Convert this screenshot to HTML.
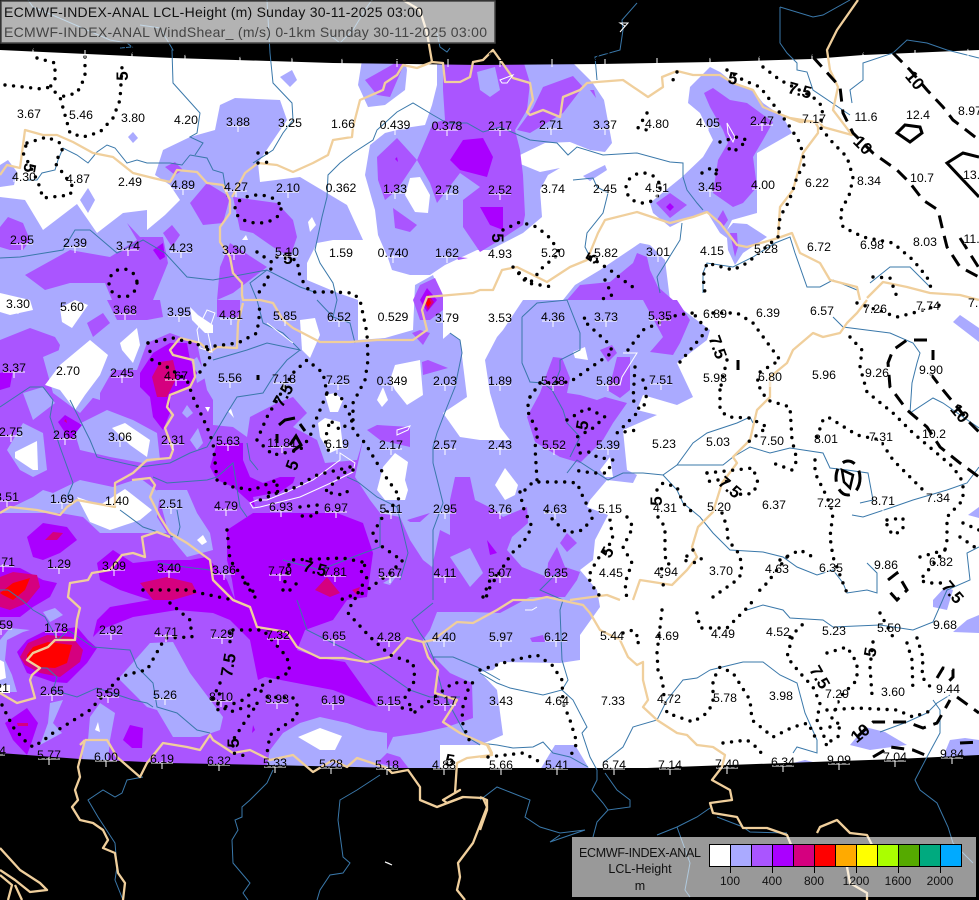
<!DOCTYPE html>
<html><head><meta charset="utf-8"><title>ECMWF-INDEX-ANAL LCL-Height</title>
<style>
html,body{margin:0;padding:0;background:#000}
svg{display:block;font-family:"Liberation Sans",sans-serif}
.lb text{font-size:12.3px;text-anchor:middle;fill:#000}
.cl text{font-size:17px;font-weight:bold;text-anchor:middle;fill:#000}
</style></head><body>
<svg width="979" height="900" viewBox="0 0 979 900" xmlns="http://www.w3.org/2000/svg">
<defs><path id="c" d="M-11 4H11M0 2V10" stroke="#fff" stroke-width="1" fill="none"/><path id="t" d="M0 2V10" stroke="#fff" stroke-width="1" fill="none"/></defs>
<rect width="979" height="900" fill="#fff"/>

<!-- light -->
<g fill="#aaaaff">
<polygon points="0,197 0,770 440,770 440,745 480,745 503,735 497,690 480,672 493,670 500,662 560,663 580,660 580,635 600,607 597,590 580,570 593,560 595,540 608,515 587,507 590,500 607,480 633,483 637,475 627,470 623,430 657,415 637,410 643,395 677,405 693,397 677,363 707,340 710,330 670,300 665,260 650,245 640,243 600,270 575,285 563,300 523,300 503,330 497,337 485,360 490,393 500,427 510,440 480,440 460,437 443,413 467,397 460,340 450,333 430,350 443,343 443,300 433,275 415,285 413,330 385,338 358,340 358,300 338,293 307,280 307,263 317,243 333,240 363,240 347,205 300,177 260,182 258,163 270,145 287,120 280,100 235,98 220,105 215,130 190,137 163,150 155,175 170,185 180,200 165,215 147,230 147,210 123,213 97,233 77,204 43,230 25,200"/>
<polygon points="362,60 358,85 368,107 385,105 405,90 407,70 405,60"/>
<polygon points="437,60 437,85 432,105 425,125 405,128 385,133 370,145 365,175 375,210 378,235 388,258 392,270 410,275 430,275 445,265 477,250 490,250 523,233 542,217 540,190 548,175 560,168 540,172 518,163 520,155 545,143 570,142 590,150 605,152 612,143 604,100 592,82 570,60"/>
<polygon points="583,176 605,165 607,170 590,181"/>
<polygon points="710,67 690,87 688,103 700,113 713,140 703,157 682,177 650,203 653,213 670,227 690,217 707,212 720,233 727,238 728,250 735,265 743,253 767,237 747,224 733,223 727,230 732,220 757,213 757,167 757,153 792,133 783,117 763,103 753,90 730,80 720,72"/>
<polygon points="280,77 292,70 297,80 290,87"/>
<polygon points="128,137 133,132 138,138 133,143"/>
<polygon points="0,165 8,160 17,172 14,185 0,187"/>
<polygon points="80,200 88,188 95,200 88,213"/>
<polygon points="953,322 960,315 979,328 979,342"/>
<polygon points="968,515 979,507 979,518"/>
<polygon points="933,600 945,587 953,590 947,610 933,607"/>
<polygon points="953,632 967,620 979,615 979,633"/>
<polygon points="850,745 865,727 885,732 907,745 870,750"/>
<polygon points="943,757 950,740 965,738 979,740 979,757"/>
<polygon points="793,763 805,760 817,763"/>
<polygon points="540,770 555,745 575,745 590,770"/>
</g>

<!-- purple -->
<g fill="#aa55ff">
<polygon points="0,340 30,328 55,337 60,345 50,385 100,400 100,393 113,370 137,370 147,343 170,333 197,343 207,390 213,400 213,425 233,427 247,437 250,417 277,403 293,397 307,413 293,427 317,440 325,463 357,460 363,440 355,477 370,500 380,513 400,517 410,540 423,560 432,567 440,530 450,535 450,500 455,477 470,477 475,500 495,510 503,517 527,507 528,523 512,537 507,550 522,567 547,577 548,563 557,547 565,567 580,572 577,580 565,597 530,597 500,613 473,612 437,612 430,630 423,640 430,653 450,673 472,683 473,718 447,727 420,733 393,737 387,750 387,733 367,730 347,723 320,717 300,723 283,733 270,750 265,775 0,775"/>
<polygon points="25,275 70,250 110,257 137,240 127,223 140,237 163,237 168,263 153,300 160,300 163,317 147,320 117,320 107,300 112,300 105,283 70,283 45,290"/>
<polygon points="87,323 103,313 110,323 93,337"/>
<polygon points="217,300 240,300 240,317 217,317"/>
<polygon points="443,60 523,60 530,83 527,110 515,130 520,150 523,175 525,215 523,225 500,240 480,252 463,227 463,200 480,187 460,173 437,203 430,183 417,160 433,123 445,120 443,90"/>
<polygon points="517,130 533,108 543,87 573,76 583,87 563,113 530,133"/>
<polygon points="590,90 594,90 596,98"/>
<polygon points="365,80 397,62 405,62 390,97 377,95"/>
<polygon points="377,157 397,138 417,160 397,190 385,200 378,180"/>
<polygon points="393,208 417,225 410,232 395,228"/>
<polygon points="704,93 713,88 730,100 747,103 773,122 763,140 753,157 757,187 743,203 733,207 713,193 718,160 728,143 723,130 710,107"/>
<polygon points="656,203 670,193 687,205 670,218"/>
<polygon points="717,220 723,210 728,220 723,227"/>
<polygon points="730,233 737,233 738,247 735,257"/>
<polygon points="567,300 580,285 610,282 633,263 637,253 647,257 650,270 658,287 673,300"/>
<polygon points="643,300 677,300 690,320 680,343 673,355 650,352 663,337"/>
<polygon points="600,350 612,345 617,353 608,362"/>
<polygon points="617,357 630,357 630,390 620,398 607,390 612,377"/>
<polygon points="553,357 562,358 570,378 567,393 580,395 597,400 605,397 627,403 613,423 603,440 580,463 560,457 535,442 527,417 540,393 547,373"/>
<polygon points="560,543 567,533 577,543 567,552"/>
<polygon points="530,638 543,635 545,642 532,642"/>
<polygon points="165,167 175,162 183,170 175,175"/>
<polygon points="190,203 207,183 230,197 223,223 203,225"/>
<polygon points="233,197 277,203 293,220 297,237 290,257 273,247 253,233 240,230"/>
<polygon points="220,267 230,243 267,267 233,293 217,300"/>
<polygon points="163,233 172,225 180,235 172,247"/>
<polygon points="0,227 8,217 23,223 30,240 23,250 10,250 0,247"/>
<polygon points="457,257 468,258 458,260"/>
<polygon points="413,300 420,285 435,278 443,295 443,310 430,320 420,320"/>
<polygon points="412,333 420,330 430,333 423,345"/>
<polygon points="422,362 428,360 448,368 423,375"/>
<polygon points="367,430 377,425 410,427 410,447 380,440"/>
<polygon points="407,520 430,513 420,522 410,522"/>
<polygon points="377,763 387,753 400,757 410,770"/>
</g>

<!-- light patches on purple -->
<g fill="#aaaaff">
<polygon points="477,72 495,67 500,90 490,97 480,90"/>
<polygon points="43,357 90,337 113,350 107,380 97,393 80,413 53,393"/>
<polygon points="23,393 43,387 55,403 33,420"/>
<polygon points="7,450 23,423 43,433 47,470 33,477 20,470"/>
<polygon points="73,427 107,410 133,420 157,433 160,460 143,463 110,457 80,450"/>
<polygon points="0,513 33,497 43,490 53,493 80,480 113,487 140,478 160,493 157,517 167,533 140,533 100,533 83,517 60,513 20,513"/>
<polygon points="157,490 187,490 197,513 210,533 213,550 187,557 173,540 167,527"/>
<polygon points="197,357 207,377 197,383 193,360"/>
<polygon points="182,413 187,405 193,413 187,418"/>
<polygon points="190,440 198,428 203,443 197,450"/>
<polygon points="450,557 470,548 483,573 470,587"/>
<polygon points="383,583 397,575 390,585"/>
<polygon points="120,677 150,643 173,642 190,673 223,717 220,730 200,737 173,737 157,710 147,707 120,680"/>
<polygon points="90,717 100,703 115,713 110,740 107,770 82,770 83,740 88,740"/>
<polygon points="50,703 63,700 53,723 62,733 40,745 48,723"/>
<polygon points="0,640 10,628 30,630 23,632 7,640 5,660 12,675 17,692 0,692"/>
<polygon points="43,612 55,608 63,615 50,622"/>
</g>

<!-- white holes -->
<g fill="#fff">
<polygon points="410,178 420,177 430,195 428,213 415,212 405,195"/>
<polygon points="308,222 312,217 316,225 310,232"/>
<polygon points="242,240 246,235 248,240 245,240"/>
<polygon points="60,308 75,300 88,305 72,328 62,322"/>
<polygon points="0,293 30,300 33,310 10,315 0,312"/>
<polygon points="190,307 198,315 213,325 213,333 205,333 192,320"/>
<polygon points="120,343 137,328 140,345 133,363 122,350"/>
<polygon points="45,385 60,365 90,340 108,355 100,375 85,395 75,410 60,390"/>
<polygon points="15,452 37,441 38,470 33,470 15,458"/>
<polygon points="112,428 125,423 150,440 147,457 130,445"/>
<polygon points="77,497 100,505 125,489 152,510 140,520 110,530 90,522"/>
<polygon points="197,540 203,535 207,542 202,545"/>
<polygon points="377,490 383,467 395,453 408,462 405,480 408,490 405,500 385,500"/>
<polygon points="390,380 395,365 420,360 423,395 407,405 395,390"/>
<polygon points="377,400 383,387 388,400 382,407"/>
<polygon points="325,395 335,393 343,400 338,412 330,412"/>
<polygon points="318,423 325,418 340,422 343,447 330,453 320,437"/>
<polygon points="300,320 315,318 320,335 310,358 302,350"/>
<polygon points="298,737 320,728 342,736 335,750 320,750"/>
<polygon points="95,730 98,722 100,732"/>
<polygon points="0,660 4,662 6,678 0,680"/>
<polygon points="0,685 10,685 10,693 0,693"/>
<polygon points="495,485 505,468 518,485 515,495 505,500"/>
<polygon points="573,352 585,347 588,360 575,358"/>
<polygon points="600,470 610,457 613,477 605,477"/>
<polygon points="205,407 210,407 208,412"/>
<polygon points="228,411 231,409 234,418"/>
</g>

<!-- violet -->
<g fill="#aa00ff">
<polygon points="450,160 463,140 483,138 493,157 487,177 460,170"/>
<polygon points="480,207 503,207 503,230 490,225"/>
<polygon points="670,203 674,207 670,211 666,207"/>
<polygon points="395,159 397,157 398,162"/>
<polygon points="140,373 153,353 170,343 187,343 190,360 197,373 190,387 170,397 170,413 163,430 153,417 150,397 140,387"/>
<polygon points="58,422 65,415 82,425 70,440"/>
<polygon points="0,373 13,370 10,387 0,390"/>
<polygon points="210,467 217,443 243,443 243,460 250,477 263,483 280,477 295,477 293,483 280,492 253,497 255,507 233,487 217,480"/>
<polygon points="97,563 113,550 133,563 160,560 190,560 207,557 227,580 235,600 253,610 293,633 297,650 320,658 345,662 360,683 377,707 333,690 265,677 258,680 250,640 230,620 213,613 177,610 133,617 100,630 93,637 97,620 110,607 150,600 120,590 100,580"/>
<polygon points="227,530 253,513 337,513 363,523 373,553 367,597 347,600 333,620 305,630 297,650 253,620 235,600 232,580 227,560"/>
<polygon points="27,537 43,523 67,527 77,540 60,553 43,560 33,557"/>
<polygon points="0,567 20,568 43,580 57,583 50,597 33,607 20,617 0,617"/>
<polygon points="17,652 27,640 43,632 77,627 88,640 97,648 87,663 67,683 53,682 27,673"/>
<polygon points="5,723 27,708 38,723 30,747 27,755 13,740"/>
<polygon points="123,740 130,725 143,728 142,748 132,748"/>
<polygon points="153,250 163,243 165,257 160,260"/>
<polygon points="420,300 427,288 437,300 427,312"/>
<polygon points="487,540 497,553 490,555"/>
<polygon points="253,725 255,730 252,733"/>
</g>

<!-- magenta -->
<g fill="#d5007f">
<polygon points="152,377 160,362 173,360 177,377 167,397 157,397"/>
<polygon points="45,540 53,532 63,533 57,540"/>
<polygon points="0,577 13,572 37,575 40,587 27,603 10,610 0,607"/>
<polygon points="20,657 28,643 47,635 72,637 83,650 80,662 60,677 40,673 25,665"/>
<polygon points="17,723 28,723 28,726 18,726"/>
<polygon points="315,590 327,577 340,593 330,597"/>
<polygon points="352,590 360,587 357,595"/>
<polygon points="140,583 167,577 192,583 197,593 173,600 153,600"/>
<polygon points="424,302 428,294 434,302 428,310"/>
<polygon points="64,421 66,419 67,423"/>
</g>
<g fill="#ff0000">
<polygon points="0,593 13,583 30,578 25,590 13,600 3,595"/>
<polygon points="27,655 33,647 48,642 72,645 67,663 55,668 38,667 27,660"/>
<polygon points="426,303 429,298 431,303 428,307"/>
</g>

<!-- black outside -->
<polygon fill="#000" points="0,0 979,0 979,50 863,55 812,59 713,62 600,64 480,65 333,63 173,58 43,52 0,50"/>
<polygon fill="#000" points="0,753 80,759 167,763 267,765 400,768 647,768 813,762 897,759 979,755 979,900 0,900"/>

<!-- rivers -->
<g fill="none" stroke="#3a78aa" stroke-width="1">
<path d="M28,0 33,7 57,17 87,30 110,40 127,43 132,47 120,48"/>
<path d="M140,25 160,28 173,50 172,50 173,83 200,113 197,133 190,137 203,143 195,155"/>
<path d="M190,155 207,158 213,170 223,173 227,197"/>
<path d="M190,155 182,165 170,163 147,163 137,160 127,163 115,148 107,145 97,152 88,163 77,155 63,148 58,160 55,170 42,173 37,180 27,180"/>
<path d="M267,0 270,53 273,83 292,103 293,120 283,133 273,150 253,163"/>
<path d="M327,33 340,43 353,30 367,7 372,0"/>
<path d="M437,33 440,47 447,52 450,48"/>
<path d="M447,123 433,115 413,103 397,112 377,130 373,140 353,153 340,163 328,175 327,197 322,217 315,250 320,263 333,283 337,300 333,317"/>
<path d="M317,300 333,317 350,323 355,343"/>
<path d="M447,123 467,123 483,132 500,127 530,140 557,143 568,155 577,147 603,155 637,153 670,162 683,163 683,177 687,190 697,203 703,210"/>
<path d="M597,80 595,57 620,50 623,30 622,20 637,3"/>
<path d="M573,180 593,178 597,187 608,193 603,213 587,233 585,247 590,257"/>
<path d="M893,53 907,40 927,43 947,50 979,58"/>
<path d="M893,53 863,63 863,80 850,90 852,103"/>
<path d="M780,7 813,17 823,15 850,0"/>
<path d="M780,7 780,43 787,53 797,63 797,70 807,72 813,90 850,115"/>
<path d="M682,223 680,240 657,277 660,293"/>
<path d="M703,293 703,273 707,263 733,267 753,257 775,243 790,237 795,253 807,287 820,287 833,280 857,290"/>
<path d="M870,283 890,267 910,267 930,287"/>
<path d="M833,317 843,327 890,333 913,343 920,353 917,363 912,383 910,413 933,398 943,403 953,410 979,428"/>
<path d="M522,317 537,303 567,300 580,333 580,350 560,360 560,370 552,390 563,410 567,423 580,437 570,457"/>
<path d="M522,317 522,363 530,382 543,383 552,390"/>
<path d="M567,473 577,460 608,480 623,473 643,473 663,475 677,465 723,465 733,457 750,447 770,453 790,448 823,453 830,468 847,470 868,473 873,500 860,503"/>
<path d="M677,465 693,443 707,433 737,423 750,417 753,423"/>
<path d="M852,515 863,517 890,508 913,500 947,490 967,483 979,467"/>
<path d="M663,475 677,490 683,503 700,517 713,533 730,550 763,552 783,557 797,567 817,575 833,570 843,583 847,593 867,590 877,593 877,573 867,563"/>
<path d="M979,547 967,553 970,580 947,590 933,622 913,630 880,625 833,627 823,620 790,618 783,610 763,605 747,610"/>
<path d="M710,670 743,662 763,662 780,675 797,683 805,713 817,740 817,753 797,747 793,753"/>
<path d="M710,670 697,678 683,680 667,700 657,720 633,727 623,747 603,763"/>
<path d="M480,673 497,683 510,688 543,695 562,690 568,680 562,660 560,610 563,600 540,590 560,570"/>
<path d="M562,690 573,700 587,727 582,733 590,757 597,770 597,780 592,790 603,803 608,810 630,807 630,800 617,790 605,773"/>
<path d="M480,743 497,745 513,748 533,747 543,742 553,753 570,757 588,767"/>
<path d="M933,700 940,710 940,733 927,757 915,780 920,790 937,803 948,827 953,843 973,863"/>
<path d="M880,732 907,722 927,713 937,703 950,695"/>
<path d="M273,770 267,783 250,800 242,807 242,817 235,820 238,830 232,840 233,863 250,883 243,893 248,900"/>
<path d="M380,775 357,790 340,800 338,820 343,857 350,863 343,873 330,875 320,890 317,900"/>
<path d="M143,777 127,780 122,793 115,797 103,790 88,800 98,817 115,843 117,867 115,880 123,900"/>
<path d="M480,800 497,787 530,800 525,817 540,827 560,833 585,830 550,842 560,835"/>
<path d="M593,837 597,822 608,810"/>
<path d="M657,835 677,827 697,817 710,808"/>
<path d="M677,827 690,863 685,890 690,897"/>
<path d="M717,817 743,827 750,832 787,833"/>
<path d="M0,258 20,257 63,250 75,230 90,230 117,253 143,240 165,253 187,277 213,280 267,270 300,287 317,293"/>
<path d="M267,270 250,283 257,300 263,323 283,333 300,350 267,343 247,350 213,360"/>
<path d="M300,350 287,360 273,377 263,393 237,397 227,413 207,447 190,453 170,463 140,467 97,457 90,440 70,400"/>
<path d="M0,407 30,387 43,387 53,400 50,417 60,447 73,483 67,497"/>
<path d="M153,477 167,483 207,480 217,477 233,463 240,507 247,517"/>
<path d="M247,443 250,460 258,470"/>
<path d="M120,510 143,527 173,537"/>
<path d="M177,510 180,527 177,538"/>
<path d="M347,477 358,482 377,497 397,507 408,553 400,580"/>
<path d="M380,517 380,547 353,557 320,570 283,560"/>
<path d="M158,563 185,567 210,570"/>
<path d="M450,333 460,340 462,353 455,387 447,407 437,433 433,447 433,463 443,503 433,530 433,600"/>
<path d="M0,590 8,590 22,600 33,610 45,617 58,640 68,630 93,647 130,650 137,667 153,683 157,707 177,713 197,730 210,733"/>
<path d="M40,668 47,668 57,677 53,690 77,697 97,688 133,700 147,703 153,707"/>
<path d="M297,600 307,630 347,650 377,667 410,690 430,697 460,697"/>
<path d="M433,603 412,620 420,633 427,643 433,657 453,657 477,667 500,680"/>
<path d="M433,657 443,693 467,737 480,745"/>
</g>

<!-- borders -->
<g fill="none" stroke="#f0cf9c" stroke-width="2.3" stroke-linejoin="round">
<path d="M0,175 7,165 20,168 25,130 43,135 57,135 73,142 93,153 113,157 133,173 153,178 170,182 177,170 197,172 207,183 223,185 230,200 230,213 220,227 220,242 230,257 233,273 242,283 242,295 243,300 260,300 273,303 283,320 293,328 320,342 350,342 377,340 413,340 427,330 422,310 427,297 473,293 480,290 493,290 502,270 517,267 547,282 570,267 587,260 598,233 605,220 637,212 670,223 693,217 707,212 720,223 737,245 747,247 778,238 792,233 800,253 820,263 830,280 857,287 860,300"/>
<path d="M867,298 883,282 907,287 930,293 960,295 979,300"/>
<path d="M778,238 780,207 793,190 803,153 818,133 818,127 815,122 790,118"/>
<path d="M858,0 837,30 827,50 830,70 838,87 833,110 852,135 823,127 820,123 800,122 782,115 763,107 753,90 733,83 720,75 693,75 677,71 662,77 663,87 648,97 623,80 597,82 587,83 580,90 563,97 560,117 543,110 530,115 527,112 533,100 530,83 513,78 493,50 483,60 473,62 470,77 460,82 445,82 443,63 432,62 417,68 403,65 397,75 385,83 383,90 360,100 353,127 352,137 333,140 328,155 313,163 293,172 277,165 258,163 245,173 232,197"/>
<path d="M432,62 427,33 420,10 403,0"/>
<path d="M180,338 170,350 173,355 193,360 195,377 190,387 170,395 167,407 173,415 165,428 173,450 170,458 147,460 133,473 115,483 115,507 77,500 67,507 60,515 37,510 10,507 0,513"/>
<path d="M180,338 200,343 210,352 217,347 237,348 238,323 243,303"/>
<path d="M132,480 150,478 155,485 150,497 160,517 170,533 187,543 210,560 213,580 233,600 250,607 257,627 287,632 297,647 320,658 343,658 367,662 390,657 407,638 423,642 433,640 457,622 473,623 497,610 513,600 533,600 547,597 560,600 583,605 590,613 600,630 620,640 628,657 637,665 643,662 643,680 648,700 643,707 657,720 677,733 687,735 697,745 713,747 725,755 722,767 712,780 730,790 732,800 710,803 713,813 737,817 743,828 767,828 787,835 792,847"/>
<path d="M423,642 428,657 438,670 435,693 457,700 443,722 460,733 487,745 492,755 467,758 457,763 455,793 460,790 443,800 447,803 463,797 483,798 487,807 473,843 458,863 460,877 457,890 465,900"/>
<path d="M85,740 107,740 117,757 140,777 147,763 163,743 187,747 200,750 210,735 213,740 233,753 250,750 270,760 293,755 313,772 333,760 347,767 357,758 387,768 392,773 408,770 420,787 420,800 437,807 463,797"/>
<path d="M85,740 78,767 80,777 75,790 78,800 72,807 80,820 93,823 103,830 108,840 103,848 115,853 118,873 125,883 123,900"/>
<path d="M85,740 80,745"/>
<path d="M0,693 17,703 35,698 30,680 32,675 40,668 27,660 33,653 48,647 55,640 75,640 77,620 80,608 68,597 70,583 88,580 92,573 110,570 122,555 133,553 145,557 142,537 157,532 170,537"/>
<path d="M0,848 20,870 40,883 47,890 30,892 15,880 0,870"/>
<path d="M0,875 12,885 8,900M15,885 22,900"/>
<path d="M817,833 820,827 837,820 850,833 867,835 873,847 847,867 850,883 867,893 867,900"/>
<path d="M633,600 640,580 672,585 687,570 697,557 692,547 698,527 713,512 722,483 737,463 733,457 750,440 757,410 770,397 770,377 787,363 793,350 813,333 823,337 840,333 847,323 857,313 867,300"/>
<path d="M620,600 607,595 570,600"/>
<path d="M480,743 488,745 492,753 488,757 480,757"/>
<path d="M480,797 487,800 487,810 480,830"/>
</g>

<!-- white outlines -->
<g fill="none" stroke="#fff" stroke-width="1">
<path d="M340,453 355,463 353,472 333,482 300,497 260,507 253,508 250,503 257,500 267,500 287,492 313,480 340,460Z"/>
<path d="M197,330 207,310 215,313 208,333 212,352 200,348Z"/>
<path d="M397,430 410,426 408,430 397,435Z"/>
<path d="M727,123 735,137 733,142 728,133Z"/>
<path d="M760,173 767,173 765,178 760,177Z"/>
<path d="M500,80 513,75 507,83 502,83Z"/>
<path d="M620,23 628,23 620,32 625,26Z"/>
<path d="M623,353 637,353 622,377 620,385 612,383"/>
<path d="M385,862 392,865 388,863Z"/>
<path d="M525,610 532,610 537,607"/>
<path d="M267,323 280,333 293,343"/>
</g>

<!-- dotted contours -->
<g fill="none" stroke="#000" stroke-width="3.4" stroke-linecap="round" stroke-dasharray="0 8.6">
<path d="M37,58 55,63 55,80 50,87 60,97 70,133 83,137 100,132 113,118 120,100 122,67"/>
<path d="M5,85 42,89 50,87"/>
<path d="M85,57 85,77 77,93 60,97"/>
<path d="M27,143 47,137 60,143 63,148 55,163 62,172 73,187 70,195 43,198 38,182 27,160 23,153 27,143"/>
<ellipse cx="258" cy="209" rx="23" ry="14"/>
<circle cx="123" cy="283" r="14"/>
<path d="M258,153 270,153M258,163 270,162"/>
<path d="M257,252 273,263 267,280 263,287 257,295"/>
<path d="M277,257 297,260 300,277 310,292 333,292 353,293 360,300 367,333 368,360 365,380 353,403 353,430 365,443 383,473 400,497 382,518 373,533 377,543 397,557 403,560 390,573 367,590 353,600 348,613 370,637 390,655 413,663 415,680 405,697 413,710 397,707"/>
<path d="M415,712 453,683 473,682 468,690 462,710 463,725 470,742"/>
<path d="M148,343 173,338 207,347 238,343 257,333 260,310 255,302"/>
<path d="M148,343 152,360 167,367 187,380 193,397 207,427 213,443 217,480 233,487 253,490 277,480 277,493 253,503"/>
<path d="M200,372 210,357 207,347"/>
<path d="M227,530 230,560 247,583 257,597"/>
<path d="M143,590 190,590 200,593 233,600"/>
<path d="M170,603 190,620 192,637 165,638 147,670 137,672 120,677 90,710 53,733 40,743 32,745"/>
<path d="M233,630 263,630 287,657 290,672 273,680 257,688 243,700 217,710 220,690"/>
<path d="M230,633 230,647"/>
<path d="M220,683 212,700 230,712 258,703 248,717 233,740 233,753 250,757"/>
<path d="M297,705 297,717 270,735 267,753"/>
<path d="M293,698 267,697 258,688"/>
<path d="M2,705 13,727 27,743 33,747"/>
<path d="M257,440 267,417 293,373 307,360 323,373 327,393 320,410 317,417 312,430 310,437 300,450 273,455 257,440"/>
<path d="M327,393 340,395 347,410 353,420 340,430 330,420 325,440 330,455"/>
<path d="M353,470 343,473 325,492 343,495 353,487"/>
<path d="M350,467 317,475 290,490 267,493"/>
<path d="M300,507 318,505 316,516 300,516"/>
<path d="M283,590 290,560 343,558 367,563 360,570 367,577 358,593 340,600"/>
<path d="M245,583 257,600M290,590 297,583"/>
<path d="M483,597 490,580 500,573"/>
<path d="M525,490 533,482 567,482 577,483 583,497 593,517 583,530 567,533 553,520 543,507"/>
<path d="M520,492 523,507 532,527 523,543 512,553 503,567 490,587 485,600"/>
<path d="M530,397 527,410 538,433 535,447 537,480"/>
<path d="M540,383 570,382 590,368 613,352 607,342 583,320 587,315"/>
<path d="M540,383 530,397"/>
<path d="M628,350 643,330 677,315 693,313"/>
<path d="M713,313 737,313 753,323 780,360 760,372 757,383 767,400 790,407 792,440 797,460 792,470 770,462"/>
<path d="M680,362 707,330 693,313"/>
<path d="M720,390 720,410 728,417 750,418 767,427 747,443"/>
<path d="M727,360 723,377 720,390"/>
<path d="M635,367 633,400 640,410 623,427 617,433 637,430"/>
<path d="M643,380 647,393 643,410"/>
<path d="M567,420 587,408 605,417 593,428 577,437 580,453 590,452 597,457 613,460 607,473 593,473 573,470"/>
<path d="M707,473 753,468 758,483 753,493 743,495 737,493"/>
<path d="M707,473 710,483M718,480 730,482"/>
<path d="M657,490 663,483 677,487 683,503 693,513"/>
<path d="M658,517 665,527 665,557 670,563 660,570 665,593"/>
<path d="M693,550 683,560 697,563 703,557"/>
<path d="M722,513 727,527 728,540 740,555 742,573 737,580 713,597"/>
<path d="M610,520 613,540 597,560 588,577 595,590 603,600"/>
<path d="M627,517 633,527 623,547 632,563 625,583 627,600"/>
<path d="M857,303 897,317 913,313 940,305"/>
<path d="M850,337 862,350 860,367 867,392 893,413 913,433 953,467 963,482 963,500 947,517 947,540 945,550"/>
<path d="M817,437 823,420 828,417 857,435 880,440 893,460 923,490"/>
<path d="M815,460 815,473 827,497 833,513 830,537 833,557 843,583 847,593"/>
<path d="M780,560 800,550 813,557"/>
<path d="M787,557 767,583 757,593"/>
<path d="M887,520 903,518 903,530 893,535 887,527Z"/>
<path d="M920,557 945,550 920,580 927,583 947,583"/>
<path d="M963,523 979,530M960,537 979,550"/>
<path d="M727,70 743,80 760,87 770,100 780,113 790,127 800,143 805,163 797,177 792,193 788,203 780,217 778,237 747,263 733,270 707,263 703,277 705,293"/>
<path d="M763,67 780,80 813,97 823,107 820,127 833,143 847,157 853,177 850,193 840,213 843,227 863,237 893,243 913,260 927,277 933,293"/>
<path d="M873,277 890,278 897,297"/>
<path d="M647,113 638,128 647,130 650,123"/>
<path d="M677,72 673,80 680,82"/>
<ellipse cx="643" cy="188" rx="17" ry="15"/>
<path d="M720,142 737,137 747,140 740,147 733,152 727,147"/>
<path d="M702,173 713,167 720,173 710,175"/>
<path d="M503,230 520,222 537,227 550,238 560,253 543,267 530,283 513,267 527,283 553,287"/>
<path d="M590,257 610,270 623,280 637,290"/>
<path d="M605,280 612,295 600,300"/>
<path d="M623,633 633,630 640,640 635,647"/>
<path d="M662,610 657,653 658,670 663,682 663,690 667,713 693,722 707,713 713,703 713,680 720,667 733,673 750,700 752,720 773,737 793,727 808,723 815,737"/>
<path d="M697,613 700,628 727,628 747,608 752,602"/>
<path d="M792,638 787,657 800,673 813,687 820,703 817,720 823,733 827,747"/>
<path d="M790,637 807,620"/>
<path d="M873,642 870,667 872,695"/>
<path d="M827,653 847,647 857,663 857,680 840,697 830,723"/>
<path d="M907,643 912,660 913,693"/>
<path d="M917,638 923,657 922,677 933,690"/>
<path d="M827,710 857,708 897,710 913,717 933,710"/>
<path d="M830,727 840,722 838,737 827,743"/>
<path d="M723,743 747,740 760,750 763,760"/>
<path d="M480,670 513,660 537,655 552,665 562,680 563,703 570,720 577,743 570,757"/>
<path d="M488,757 523,753 540,762"/>
<path d="M880,613 893,637"/>
</g>

<!-- dashed / solid contours -->
<g fill="none" stroke="#000" stroke-width="3">
<g stroke-dasharray="13 8">
<path d="M813,57 840,87 843,113 853,133 873,153 897,170 910,183 923,200 938,210 942,227 947,247 960,267 979,277"/>
<path d="M893,53 910,70 927,90 943,107 953,120 979,140"/>
<path d="M927,340 907,340 893,350 888,363 890,387 907,410 927,427 940,447 960,463 979,477"/>
<path d="M933,350 933,360"/>
<path d="M930,373 943,390 957,407 970,423 979,432"/>
<ellipse cx="848" cy="478" rx="12" ry="17"/>
<path d="M888,580 897,573 907,590 897,600 888,590"/>
<path d="M937,678 943,668 953,670 953,677 947,683"/>
<path d="M857,737 873,722 907,722 923,728 937,723 950,700"/>
<path d="M957,697 979,713"/>
<path d="M873,757 890,747 913,750 930,757"/>
<path d="M960,743 979,742"/>
<path d="M960,238 979,268"/>
</g>
<path d="M897,133 905,125 920,127 922,133 910,142 897,133Z"/>
<path d="M979,157 963,153 947,163 979,197"/>
<path d="M842,470 853,475 850,488 844,482Z" stroke-width="2.5"/>
<path d="M279,425 285,420 295,418M300,424 305,431M277,434 277,443M290,445 296,436 301,445 293,451M258,375 258,380"/>
<path d="M738,360 738,370" />
</g>

<!-- contour labels -->
<g class="cl">
<text transform="translate(122 76) rotate(-90)" y="6">5</text>
<text transform="translate(30 168) rotate(100)" y="6">5</text>
<text transform="translate(288 258)" y="6">5</text>
<text transform="translate(498 238) rotate(90)" y="6">5</text>
<text transform="translate(592 258) rotate(-60)" y="6">5</text>
<text transform="translate(733 78) rotate(10)" y="6">5</text>
<text transform="translate(292 465) rotate(-70)" y="6">5</text>
<text transform="translate(582 425) rotate(-80)" y="6">5</text>
<text transform="translate(233 743) rotate(-90)" y="6">5</text>
<text transform="translate(450 760) rotate(10)" y="6">5</text>
<text transform="translate(656 501) rotate(-90)" y="6">5</text>
<text transform="translate(607 552) rotate(-60)" y="6">5</text>
<text transform="translate(870 652) rotate(-80)" y="6">5</text>
<text transform="translate(283 395) rotate(-60)" y="6">7.5</text>
<text transform="translate(315 568) rotate(15)" y="6">7.5</text>
<text transform="translate(228 665) rotate(-80)" y="6">7.5</text>
<text transform="translate(800 90) rotate(15)" y="6">7.5</text>
<text transform="translate(718 347) rotate(70)" y="6">7.5</text>
<text transform="translate(730 487) rotate(40)" y="6">7.5</text>
<text transform="translate(820 677) rotate(60)" y="6">7.5</text>
<text transform="translate(953 592) rotate(50)" y="6">7.5</text>
<text transform="translate(915 80) rotate(50)" y="6">10</text>
<text transform="translate(863 145) rotate(45)" y="6">10</text>
<text transform="translate(960 413) rotate(50)" y="6">10</text>
<text transform="translate(860 733) rotate(-40)" y="6">10</text>
</g>

<!-- value labels -->
<g class="lb">
<use href="#t" x="33" y="46"/><text x="33" y="50">1.82</text><use href="#t" x="85" y="48"/><text x="85" y="52">3.41</text><use href="#t" x="132" y="50"/><text x="132" y="54">3.50</text><use href="#t" x="185" y="52"/><text x="185" y="56">2.61</text><use href="#t" x="240" y="54"/><text x="240" y="58">4.65</text><use href="#t" x="292" y="55"/><text x="292" y="59">1.62</text><use href="#t" x="342" y="56"/><text x="342" y="60">2.61</text><use href="#t" x="397" y="57"/><text x="397" y="61">4.13</text><use href="#t" x="448" y="57"/><text x="448" y="61">0.733</text><use href="#t" x="500" y="57"/><text x="500" y="61">2.10</text><use href="#t" x="552" y="57"/><text x="552" y="61">2.43</text><use href="#t" x="605" y="57"/><text x="605" y="61">2.72</text><use href="#t" x="657" y="56"/><text x="657" y="60">4.41</text><use href="#t" x="710" y="55"/><text x="710" y="59">7.65</text><use href="#t" x="759" y="54"/><text x="759" y="58">3.33</text><use href="#t" x="812" y="52"/><text x="812" y="56">4.90</text><use href="#t" x="863" y="50"/><text x="863" y="54">7.83</text><use href="#t" x="915" y="48"/><text x="915" y="52">2.41</text><use href="#t" x="968" y="46"/><text x="968" y="50">1.60</text>
<use href="#c" x="29" y="114"/><text x="29" y="118">3.67</text><use href="#c" x="81" y="115"/><text x="81" y="119">5.46</text><use href="#c" x="133" y="118"/><text x="133" y="122">3.80</text><use href="#c" x="186" y="120"/><text x="186" y="124">4.20</text><use href="#c" x="238" y="122"/><text x="238" y="126">3.88</text><use href="#c" x="290" y="123"/><text x="290" y="127">3.25</text><use href="#c" x="343" y="124"/><text x="343" y="128">1.66</text><use href="#c" x="395" y="125"/><text x="395" y="129">0.439</text><use href="#c" x="447" y="126"/><text x="447" y="130">0.378</text><use href="#c" x="500" y="126"/><text x="500" y="130">2.17</text><use href="#c" x="551" y="125"/><text x="551" y="129">2.71</text><use href="#c" x="605" y="125"/><text x="605" y="129">3.37</text><use href="#c" x="657" y="124"/><text x="657" y="128">4.80</text><use href="#c" x="708" y="123"/><text x="708" y="127">4.05</text><use href="#c" x="762" y="121"/><text x="762" y="125">2.47</text><use href="#c" x="814" y="119"/><text x="814" y="123">7.17</text><use href="#c" x="866" y="117"/><text x="866" y="121">11.6</text><use href="#c" x="918" y="115"/><text x="918" y="119">12.4</text><use href="#c" x="970" y="111"/><text x="970" y="115">8.97</text>
<use href="#c" x="24" y="177"/><text x="24" y="181">4.30</text><use href="#c" x="78" y="179"/><text x="78" y="183">4.87</text><use href="#c" x="130" y="182"/><text x="130" y="186">2.49</text><use href="#c" x="183" y="185"/><text x="183" y="189">4.89</text><use href="#c" x="236" y="187"/><text x="236" y="191">4.27</text><use href="#c" x="288" y="188"/><text x="288" y="192">2.10</text><use href="#c" x="341" y="188"/><text x="341" y="192">0.362</text><use href="#c" x="395" y="189"/><text x="395" y="193">1.33</text><use href="#c" x="447" y="190"/><text x="447" y="194">2.78</text><use href="#c" x="500" y="190"/><text x="500" y="194">2.52</text><use href="#c" x="553" y="189"/><text x="553" y="193">3.74</text><use href="#c" x="605" y="189"/><text x="605" y="193">2.45</text><use href="#c" x="657" y="188"/><text x="657" y="192">4.51</text><use href="#c" x="710" y="187"/><text x="710" y="191">3.45</text><use href="#c" x="763" y="185"/><text x="763" y="189">4.00</text><use href="#c" x="817" y="183"/><text x="817" y="187">6.22</text><use href="#c" x="869" y="181"/><text x="869" y="185">8.34</text><use href="#c" x="922" y="178"/><text x="922" y="182">10.7</text><use href="#c" x="975" y="175"/><text x="975" y="179">13.1</text>
<use href="#c" x="22" y="240"/><text x="22" y="244">2.95</text><use href="#c" x="75" y="243"/><text x="75" y="247">2.39</text><use href="#c" x="128" y="246"/><text x="128" y="250">3.74</text><use href="#c" x="181" y="248"/><text x="181" y="252">4.23</text><use href="#c" x="234" y="250"/><text x="234" y="254">3.30</text><use href="#c" x="287" y="252"/><text x="287" y="256">5.10</text><use href="#c" x="341" y="253"/><text x="341" y="257">1.59</text><use href="#c" x="393" y="253"/><text x="393" y="257">0.740</text><use href="#c" x="447" y="253"/><text x="447" y="257">1.62</text><use href="#c" x="500" y="254"/><text x="500" y="258">4.93</text><use href="#c" x="553" y="253"/><text x="553" y="257">5.20</text><use href="#c" x="606" y="253"/><text x="606" y="257">5.82</text><use href="#c" x="658" y="252"/><text x="658" y="256">3.01</text><use href="#c" x="712" y="251"/><text x="712" y="255">4.15</text><use href="#c" x="766" y="249"/><text x="766" y="253">5.28</text><use href="#c" x="819" y="247"/><text x="819" y="251">6.72</text><use href="#c" x="872" y="245"/><text x="872" y="249">6.98</text><use href="#c" x="925" y="242"/><text x="925" y="246">8.03</text><use href="#c" x="975" y="239"/><text x="975" y="243">11.2</text>
<use href="#c" x="18" y="304"/><text x="18" y="308">3.30</text><use href="#c" x="72" y="307"/><text x="72" y="311">5.60</text><use href="#c" x="125" y="310"/><text x="125" y="314">3.68</text><use href="#c" x="179" y="312"/><text x="179" y="316">3.95</text><use href="#c" x="231" y="315"/><text x="231" y="319">4.81</text><use href="#c" x="285" y="316"/><text x="285" y="320">5.85</text><use href="#c" x="339" y="317"/><text x="339" y="321">6.52</text><use href="#c" x="393" y="317"/><text x="393" y="321">0.529</text><use href="#c" x="447" y="318"/><text x="447" y="322">3.79</text><use href="#c" x="500" y="318"/><text x="500" y="322">3.53</text><use href="#c" x="553" y="317"/><text x="553" y="321">4.36</text><use href="#c" x="606" y="317"/><text x="606" y="321">3.73</text><use href="#c" x="660" y="316"/><text x="660" y="320">5.35</text><use href="#c" x="715" y="314"/><text x="715" y="318">6.89</text><use href="#c" x="768" y="313"/><text x="768" y="317">6.39</text><use href="#c" x="822" y="311"/><text x="822" y="315">6.57</text><use href="#c" x="875" y="309"/><text x="875" y="313">7.26</text><use href="#c" x="928" y="306"/><text x="928" y="310">7.74</text><use href="#c" x="980" y="303"/><text x="980" y="307">7.14</text>
<use href="#c" x="14" y="368"/><text x="14" y="372">3.37</text><use href="#c" x="68" y="371"/><text x="68" y="375">2.70</text><use href="#c" x="122" y="373"/><text x="122" y="377">2.45</text><use href="#c" x="176" y="376"/><text x="176" y="380">4.67</text><use href="#c" x="230" y="378"/><text x="230" y="382">5.56</text><use href="#c" x="284" y="379"/><text x="284" y="383">7.18</text><use href="#c" x="338" y="380"/><text x="338" y="384">7.25</text><use href="#c" x="392" y="381"/><text x="392" y="385">0.349</text><use href="#c" x="445" y="381"/><text x="445" y="385">2.03</text><use href="#c" x="500" y="381"/><text x="500" y="385">1.89</text><use href="#c" x="553" y="381"/><text x="553" y="385">5.28</text><use href="#c" x="608" y="381"/><text x="608" y="385">5.80</text><use href="#c" x="661" y="380"/><text x="661" y="384">7.51</text><use href="#c" x="715" y="378"/><text x="715" y="382">5.98</text><use href="#c" x="770" y="377"/><text x="770" y="381">6.80</text><use href="#c" x="824" y="375"/><text x="824" y="379">5.96</text><use href="#c" x="877" y="373"/><text x="877" y="377">9.26</text><use href="#c" x="931" y="370"/><text x="931" y="374">9.90</text>
<use href="#c" x="11" y="432"/><text x="11" y="436">2.75</text><use href="#c" x="65" y="435"/><text x="65" y="439">2.63</text><use href="#c" x="120" y="437"/><text x="120" y="441">3.06</text><use href="#c" x="173" y="440"/><text x="173" y="444">2.31</text><use href="#c" x="228" y="441"/><text x="228" y="445">5.63</text><use href="#c" x="282" y="443"/><text x="282" y="447">11.81</text><use href="#c" x="337" y="444"/><text x="337" y="448">6.19</text><use href="#c" x="391" y="445"/><text x="391" y="449">2.17</text><use href="#c" x="445" y="445"/><text x="445" y="449">2.57</text><use href="#c" x="500" y="445"/><text x="500" y="449">2.43</text><use href="#c" x="554" y="445"/><text x="554" y="449">5.52</text><use href="#c" x="608" y="445"/><text x="608" y="449">5.39</text><use href="#c" x="664" y="444"/><text x="664" y="448">5.23</text><use href="#c" x="718" y="442"/><text x="718" y="446">5.03</text><use href="#c" x="772" y="441"/><text x="772" y="445">7.50</text><use href="#c" x="826" y="439"/><text x="826" y="443">8.01</text><use href="#c" x="881" y="437"/><text x="881" y="441">7.31</text><use href="#c" x="934" y="434"/><text x="934" y="438">10.2</text>
<use href="#c" x="7" y="497"/><text x="7" y="501">3.51</text><use href="#c" x="62" y="499"/><text x="62" y="503">1.69</text><use href="#c" x="117" y="501"/><text x="117" y="505">1.40</text><use href="#c" x="171" y="504"/><text x="171" y="508">2.51</text><use href="#c" x="226" y="506"/><text x="226" y="510">4.79</text><use href="#c" x="281" y="507"/><text x="281" y="511">6.93</text><use href="#c" x="336" y="508"/><text x="336" y="512">6.97</text><use href="#c" x="391" y="509"/><text x="391" y="513">5.11</text><use href="#c" x="445" y="509"/><text x="445" y="513">2.95</text><use href="#c" x="500" y="509"/><text x="500" y="513">3.76</text><use href="#c" x="555" y="509"/><text x="555" y="513">4.63</text><use href="#c" x="610" y="509"/><text x="610" y="513">5.15</text><use href="#c" x="665" y="508"/><text x="665" y="512">4.31</text><use href="#c" x="719" y="507"/><text x="719" y="511">5.20</text><use href="#c" x="774" y="505"/><text x="774" y="509">6.37</text><use href="#c" x="829" y="503"/><text x="829" y="507">7.22</text><use href="#c" x="883" y="501"/><text x="883" y="505">8.71</text><use href="#c" x="938" y="498"/><text x="938" y="502">7.34</text>
<use href="#c" x="3" y="562"/><text x="3" y="566">1.71</text><use href="#c" x="59" y="564"/><text x="59" y="568">1.29</text><use href="#c" x="114" y="566"/><text x="114" y="570">3.09</text><use href="#c" x="169" y="568"/><text x="169" y="572">3.40</text><use href="#c" x="224" y="570"/><text x="224" y="574">3.86</text><use href="#c" x="280" y="571"/><text x="280" y="575">7.79</text><use href="#c" x="335" y="572"/><text x="335" y="576">7.81</text><use href="#c" x="390" y="573"/><text x="390" y="577">5.67</text><use href="#c" x="445" y="573"/><text x="445" y="577">4.11</text><use href="#c" x="500" y="573"/><text x="500" y="577">5.07</text><use href="#c" x="556" y="573"/><text x="556" y="577">6.35</text><use href="#c" x="611" y="573"/><text x="611" y="577">4.45</text><use href="#c" x="666" y="572"/><text x="666" y="576">4.94</text><use href="#c" x="721" y="571"/><text x="721" y="575">3.70</text><use href="#c" x="777" y="569"/><text x="777" y="573">4.63</text><use href="#c" x="831" y="568"/><text x="831" y="572">6.35</text><use href="#c" x="886" y="565"/><text x="886" y="569">9.86</text><use href="#c" x="941" y="562"/><text x="941" y="566">6.82</text>
<use href="#c" x="1" y="625"/><text x="1" y="629">7.59</text><use href="#c" x="56" y="628"/><text x="56" y="632">1.78</text><use href="#c" x="111" y="630"/><text x="111" y="634">2.92</text><use href="#c" x="166" y="632"/><text x="166" y="636">4.71</text><use href="#c" x="222" y="634"/><text x="222" y="638">7.29</text><use href="#c" x="278" y="635"/><text x="278" y="639">7.32</text><use href="#c" x="334" y="636"/><text x="334" y="640">6.65</text><use href="#c" x="389" y="637"/><text x="389" y="641">4.28</text><use href="#c" x="444" y="637"/><text x="444" y="641">4.40</text><use href="#c" x="501" y="637"/><text x="501" y="641">5.97</text><use href="#c" x="556" y="637"/><text x="556" y="641">6.12</text><use href="#c" x="612" y="636"/><text x="612" y="640">5.44</text><use href="#c" x="667" y="636"/><text x="667" y="640">4.69</text><use href="#c" x="723" y="634"/><text x="723" y="638">4.49</text><use href="#c" x="778" y="632"/><text x="778" y="636">4.52</text><use href="#c" x="834" y="631"/><text x="834" y="635">5.23</text><use href="#c" x="889" y="628"/><text x="889" y="632">5.50</text><use href="#c" x="945" y="625"/><text x="945" y="629">9.68</text>
<use href="#c" x="-3" y="688"/><text x="-3" y="692">3.21</text><use href="#c" x="52" y="691"/><text x="52" y="695">2.65</text><use href="#c" x="108" y="693"/><text x="108" y="697">5.59</text><use href="#c" x="165" y="695"/><text x="165" y="699">5.26</text><use href="#c" x="221" y="697"/><text x="221" y="701">8.10</text><use href="#c" x="277" y="699"/><text x="277" y="703">3.93</text><use href="#c" x="333" y="700"/><text x="333" y="704">6.19</text><use href="#c" x="389" y="701"/><text x="389" y="705">5.15</text><use href="#c" x="445" y="701"/><text x="445" y="705">5.17</text><use href="#c" x="501" y="701"/><text x="501" y="705">3.43</text><use href="#c" x="557" y="701"/><text x="557" y="705">4.64</text><use href="#c" x="613" y="701"/><text x="613" y="705">7.33</text><use href="#c" x="669" y="699"/><text x="669" y="703">4.72</text><use href="#c" x="725" y="698"/><text x="725" y="702">5.78</text><use href="#c" x="781" y="696"/><text x="781" y="700">3.98</text><use href="#c" x="837" y="694"/><text x="837" y="698">7.29</text><use href="#c" x="893" y="692"/><text x="893" y="696">3.60</text><use href="#c" x="948" y="689"/><text x="948" y="693">9.44</text>
<use href="#c" x="-6" y="751"/><text x="-6" y="755">3.24</text><use href="#c" x="49" y="755"/><text x="49" y="759">5.77</text><use href="#c" x="106" y="757"/><text x="106" y="761">6.00</text><use href="#c" x="162" y="759"/><text x="162" y="763">6.19</text><use href="#c" x="219" y="761"/><text x="219" y="765">6.32</text><use href="#c" x="275" y="763"/><text x="275" y="767">5.33</text><use href="#c" x="331" y="764"/><text x="331" y="768">5.28</text><use href="#c" x="387" y="765"/><text x="387" y="769">5.18</text><use href="#c" x="444" y="765"/><text x="444" y="769">4.83</text><use href="#c" x="501" y="765"/><text x="501" y="769">5.66</text><use href="#c" x="557" y="765"/><text x="557" y="769">5.41</text><use href="#c" x="614" y="765"/><text x="614" y="769">6.74</text><use href="#c" x="670" y="765"/><text x="670" y="769">7.14</text><use href="#c" x="727" y="764"/><text x="727" y="768">7.40</text><use href="#c" x="783" y="762"/><text x="783" y="766">6.34</text><use href="#c" x="839" y="760"/><text x="839" y="764">9.09</text><use href="#c" x="895" y="757"/><text x="895" y="761">7.04</text><use href="#c" x="952" y="754"/><text x="952" y="758">9.84</text>
</g>

<!-- header -->
<rect x="1" y="1" width="494" height="42" fill="#fff" fill-opacity=".7" stroke="#444" stroke-width="1.5"/>
<text x="4" y="17" font-size="14" fill="#111" textLength="419" lengthAdjust="spacing">ECMWF-INDEX-ANAL LCL-Height (m) Sunday 30-11-2025 03:00</text>
<text x="4" y="37" font-size="14" fill="#444" textLength="483" lengthAdjust="spacing">ECMWF-INDEX-ANAL WindShear_ (m/s) 0-1km Sunday 30-11-2025 03:00</text>

<!-- legend -->
<rect x="572" y="837" width="404" height="60" fill="#fff" fill-opacity=".6"/>
<text x="640" y="857" font-size="12.5" fill="#111" text-anchor="middle" textLength="122" lengthAdjust="spacing">ECMWF-INDEX-ANAL</text>
<text x="640" y="873" font-size="12.5" fill="#111" text-anchor="middle">LCL-Height</text>
<text x="640" y="890" font-size="12.5" fill="#111" text-anchor="middle">m</text>
<g>
<rect x="709" y="844" width="21" height="22" fill="#fff"/>
<rect x="730" y="844" width="21" height="22" fill="#aaaaff"/>
<rect x="751" y="844" width="21" height="22" fill="#aa55ff"/>
<rect x="772" y="844" width="21" height="22" fill="#aa00ff"/>
<rect x="793" y="844" width="21" height="22" fill="#d5007f"/>
<rect x="814" y="844" width="21" height="22" fill="#ff0000"/>
<rect x="835" y="844" width="21" height="22" fill="#ffaa00"/>
<rect x="856" y="844" width="21" height="22" fill="#ffff00"/>
<rect x="877" y="844" width="21" height="22" fill="#aaff00"/>
<rect x="898" y="844" width="21" height="22" fill="#55aa00"/>
<rect x="919" y="844" width="21" height="22" fill="#00aa7f"/>
<rect x="940" y="844" width="21" height="22" fill="#00aaff"/>
</g>
<rect x="709.5" y="844.5" width="252" height="22" fill="none" stroke="#000" stroke-width="1"/>
<path d="M730.5 844V873M751.5 844V866M772.5 844V873M793.5 844V866M814.5 844V873M835.5 844V866M856.5 844V873M877.5 844V866M898.5 844V873M919.5 844V866M940.5 844V873" stroke="#000" stroke-width="1" fill="none"/>
<g font-size="12" fill="#111" text-anchor="middle">
<text x="730" y="885">100</text><text x="772" y="885">400</text><text x="814" y="885">800</text><text x="856" y="885">1200</text><text x="898" y="885">1600</text><text x="940" y="885">2000</text>
</g>
</svg>
</body></html>
